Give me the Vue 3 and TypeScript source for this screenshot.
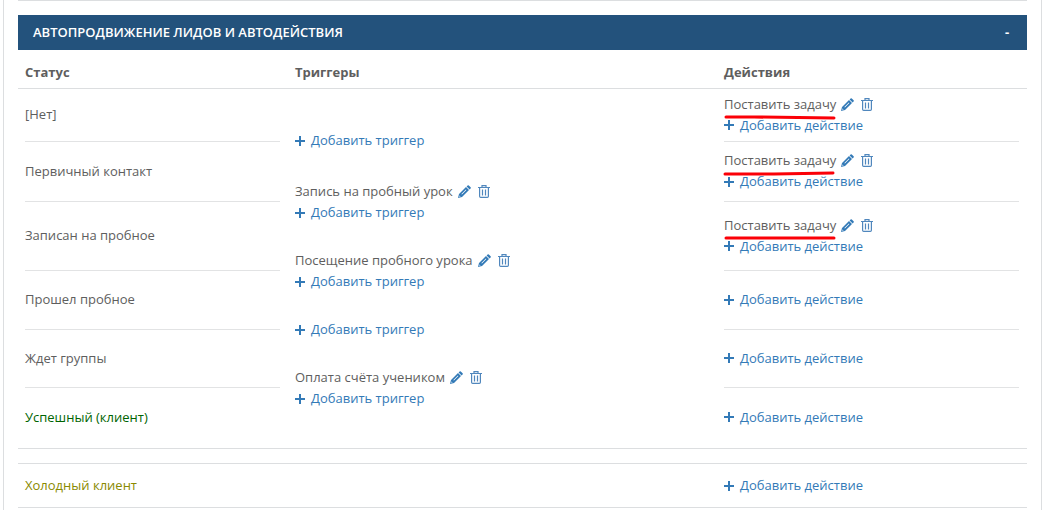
<script setup lang="ts">
interface Status {
  name: string
  tone?: string
  task?: boolean
  mark?: string
  trigger?: string
  last?: boolean
  // heights of the part above and below the point where trigger cells meet
  upper: number
  lower: number
}

const statuses: Status[] = [
  { name: '[Нет]', task: true, mark: 'M2 2 L30 2 L110 3', upper: 22, lower: 31 },
  { name: 'Первичный контакт', task: true, mark: 'M1 3 L50 3 L109 2', trigger: 'Запись на пробный урок', upper: 28, lower: 32 },
  { name: 'Записан на пробное', task: true, mark: 'M2 2 L110 2', trigger: 'Посещение пробного урока', upper: 32, lower: 37 },
  { name: 'Прошел пробное', upper: 37, lower: 22 },
  { name: 'Ждет группы', trigger: 'Оплата счёта учеником', upper: 21, lower: 37 },
  { name: 'Успешный (клиент)', tone: 'success', last: true, upper: 37, lower: 23 },
]

const pencil =
  'M0 13 1 9 8 2 11 5 4 12ZM1.2 11.8 2.6 11.4 1.6 10.4ZM3.4 8.9 3.9 9.4 8.4 4.9 7.9 4.4ZM8.6 1.4 9.6.4Q10.2 -.1 10.8.4L12.6 2.2Q13.1 2.8 12.6 3.4L11.6 4.4Z'
const bin =
  'M0 2.5H12M4 2.5V.6H8V2.5M1.6 2.5V11.3Q1.6 12.4 2.7 12.4H9.3Q10.4 12.4 10.4 11.3V2.5M4.5 4.5V10.5M7.5 4.5V10.5'
</script>

<template>
  <main class="panel">
    <section class="card">
      <header class="bar">
        <h2>Автопродвижение лидов и автодействия</h2>
        <button type="button" class="toggle" aria-label="Свернуть">-</button>
      </header>

      <table class="flow">
        <colgroup><col class="c-status" /><col /><col class="c-action" /></colgroup>
        <thead>
          <tr><th scope="col">Статус</th><th scope="col">Триггеры</th><th scope="col">Действия</th></tr>
        </thead>
        <tbody>
          <template v-for="(s, i) in statuses" :key="s.name">
            <tr :style="{ height: s.upper + 'px' }">
              <td rowspan="2" class="main" :class="[s.tone, { ruled: !s.last }]">{{ s.name }}</td>
              <td v-if="i === 0"></td>
              <td rowspan="2" class="main" :class="{ ruled: !s.last }">
                <div v-if="s.task" class="line">
                  <span class="marked">Поставить задачу<svg class="mark" viewBox="0 0 112 5" aria-hidden="true"><path :d="s.mark" /></svg></span>
                  <button type="button" class="icon edit" aria-label="Изменить"><svg width="13" height="13" viewBox="0 0 13 13"><path class="fill" fill-rule="evenodd" :d="pencil" /></svg></button>
                  <button type="button" class="icon" aria-label="Удалить"><svg width="12" height="13" viewBox="0 0 12 13"><path class="stroke" :d="bin" /></svg></button>
                </div>
                <a class="line add" href="#"><svg width="10" height="10" viewBox="0 0 10 10" aria-hidden="true"><path d="M5 0V10M0 5H10" /></svg>Добавить действие</a>
              </td>
            </tr>
            <tr :style="{ height: s.lower + 'px' }">
              <td v-if="!s.last" rowspan="2">
                <div v-if="s.trigger || statuses[i].trigger" class="line">
                  <span>{{ s.trigger }}</span>
                  <button type="button" class="icon edit" aria-label="Изменить"><svg width="13" height="13" viewBox="0 0 13 13"><path class="fill" fill-rule="evenodd" :d="pencil" /></svg></button>
                  <button type="button" class="icon" aria-label="Удалить"><svg width="12" height="13" viewBox="0 0 12 13"><path class="stroke" :d="bin" /></svg></button>
                </div>
                <a class="line add" href="#"><svg width="10" height="10" viewBox="0 0 10 10" aria-hidden="true"><path d="M5 0V10M0 5H10" /></svg>Добавить триггер</a>
              </td>
              <td v-else></td>
            </tr>
          </template>
        </tbody>
      </table>

      <table class="flow extra">
        <colgroup><col class="c-status" /><col /><col class="c-action" /></colgroup>
        <tbody>
          <tr>
            <td class="cold">Холодный клиент</td>
            <td></td>
            <td><a class="line add" href="#"><svg width="10" height="10" viewBox="0 0 10 10" aria-hidden="true"><path d="M5 0V10M0 5H10" /></svg>Добавить действие</a></td>
          </tr>
        </tbody>
      </table>
    </section>
  </main>
</template>

<style>
body {
  background: #fff;
}
</style>

<style scoped>
.panel {
  min-height: 100vh;
  box-sizing: border-box;
  margin: 0 3px;
  padding: 0 14px;
  border: solid #dcdee0;
  border-width: 0 1px;
  font: 13px/21px "Open Sans", "Noto Sans", sans-serif;
  color: #5e5e5e;
}
.card {
  border-top: 1px solid #dcdee0;
  padding-top: 14px;
}
.bar {
  display: flex;
  justify-content: space-between;
  align-items: center;
  height: 35px;
  padding: 0 15px;
  background: #23527c;
  color: #fff;
}
h2 {
  margin: 0;
  font-size: 13px;
  font-weight: 600;
  text-transform: uppercase;
}
button {
  padding: 0;
  border: 0;
  background: none;
  font: inherit;
  color: inherit;
  cursor: pointer;
}
.toggle {
  width: 10px;
  font-weight: 700;
}
.flow {
  width: 100%;
  table-layout: fixed;
  border-collapse: separate;
  border-spacing: 0;
  border-bottom: 1px solid #dcdee0;
}
.c-status {
  width: 270px;
}
.c-action {
  width: 310px;
}
th {
  height: 39px;
  padding: 6px 8px 0 7px;
  box-sizing: border-box;
  border-bottom: 1px solid #dcdee0;
  text-align: left;
  font-weight: 700;
}
td {
  padding: 0 8px 0 7px;
  vertical-align: middle;
}
.main {
  padding-bottom: 2px;
}
.ruled {
  background: linear-gradient(#e2e3e4, #e2e3e4) left bottom -2px / 100% 1px no-repeat;
  background-origin: content-box;
}
.success {
  color: #006400;
}
.cold {
  color: #8a8a00;
}
.line {
  display: flex;
  align-items: center;
  height: 21px;
}
.add {
  color: #337ab7;
  text-decoration: none;
  gap: 6px;
}
.add path {
  fill: none;
  stroke: #337ab7;
  stroke-width: 2;
}
.icon {
  display: flex;
  margin-left: 7px;
}
.edit {
  margin-left: 5px;
}
.fill {
  fill: #337ab7;
}
.stroke {
  fill: none;
  stroke: #5087bd;
  stroke-width: 1.2;
}
.marked {
  position: relative;
}
.mark {
  position: absolute;
  left: 0;
  bottom: -5px;
  width: 112px;
  height: 5px;
  overflow: visible;
}
.mark path {
  fill: none;
  stroke: #fb0007;
  stroke-width: 3;
  stroke-linecap: round;
}
.extra {
  margin-top: 14px;
  border-top: 1px solid #dcdee0;
}
.extra td {
  height: 43px;
}
</style>
